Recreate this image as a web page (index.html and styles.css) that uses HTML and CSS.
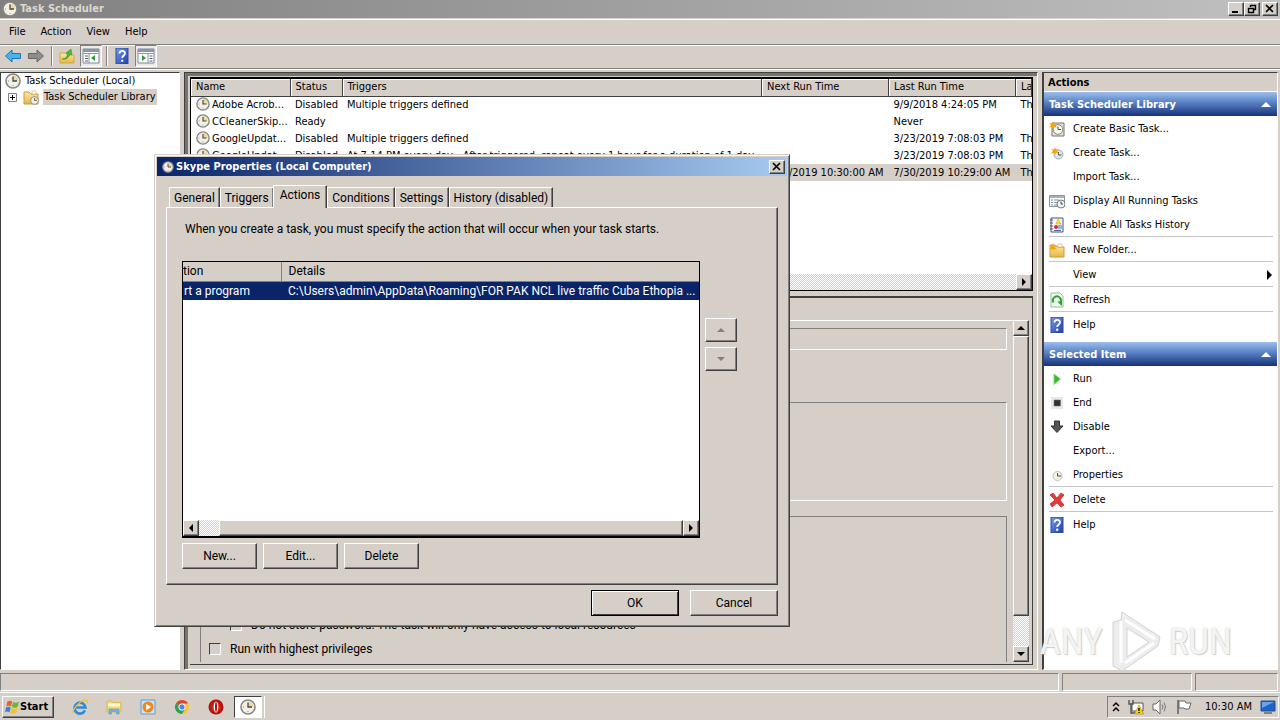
FILE: index.html
```html
<!DOCTYPE html>
<html lang="en">
<head>
<meta charset="utf-8">
<title>Task Scheduler</title>
<link rel="stylesheet" href="styles.css">
</head>
<body>
<svg class="defs" aria-hidden="true">
  <defs>
    <linearGradient id="blue" x1="0" y1="0" x2="1" y2="1"><stop offset="0" stop-color="#7a9bea"/><stop offset="1" stop-color="#1b3fa8"/></linearGradient>
    <linearGradient id="fold" x1="0" y1="0" x2="0" y2="1"><stop offset="0" stop-color="#ffeaa0"/><stop offset="1" stop-color="#e8b548"/></linearGradient>
    <radialGradient id="red"><stop offset="0" stop-color="#f04030"/><stop offset="1" stop-color="#a80808"/></radialGradient>
  </defs>
  <symbol id="clock" viewBox="0 0 16 16"><circle cx="8" cy="8" r="7" fill="#f3f0e2" stroke="#85878c" stroke-width="1.6"/><path d="M8 8V2.500A5.500 5.500 0 0 1 13.500 8z" fill="#f0d990"/><path d="M8 3.500V8h4" fill="none" stroke="#3a4764" stroke-width="1.300"/><path d="M3 8h1M8 12v1" stroke="#888"/></symbol>
  <symbol id="folder" viewBox="0 0 16 16"><path d="M1 3h5l2 2h7v10H1z" fill="url(#fold)" stroke="#c99b3c"/><path d="M9 2h4v3H9z" fill="#fff" stroke="#d0b060" stroke-width=".6"/></symbol>
  <symbol id="spark" viewBox="0 0 8 8"><path d="M4 0l1 2.500 3-.5-2 2 2 2.500-3-.5-1 2-1-2-3 .5 2-2.500-2-2 3 .5z" fill="#f2a516"/></symbol>
  <symbol id="help" viewBox="0 0 16 16"><path d="M2 0h12v16H2z" fill="url(#blue)" stroke="#2c4a9a"/><path d="M5.500 5.500c0-3.500 5.500-3.500 5.500 0 0 2-2.800 2-2.800 4.500" fill="none" stroke="#fff" stroke-width="1.800"/><circle cx="8.200" cy="12.800" r="1.200" fill="#fff"/></symbol>
  <symbol id="panel" viewBox="0 0 18 16"><path d="M1 1h16v14H1z" fill="#fff" stroke="#7c8796"/><path d="M1 1h16v3H1z" fill="#8797ab"/><path d="M1.500 5.500h15M7 6v9" stroke="#8a94a3"/><path d="M3 8h3M3 10.500h3M3 13h3" stroke="#56606e"/><path d="M13 7v6l-4-3z" fill="#2d9a35"/></symbol>
  <symbol id="close" viewBox="0 0 10 10"><path d="M1 1l7 7M8 1L1 8" stroke="#000" stroke-width="1.700"/></symbol>
  <symbol id="newtask" viewBox="0 0 16 16"><path d="M3 2h12v13H3z" fill="#e2e0de" stroke="#74777c"/><circle cx="9" cy="8.500" r="4.800" fill="#fffdf0" stroke="#82858a"/><path d="M9 5.500v3h3" fill="none" stroke="#444"/><use href="#spark" width="8" height="8"/></symbol>
  <symbol id="newclock" viewBox="0 0 16 16"><circle cx="9.500" cy="9.500" r="4.500" fill="#dbe6ee" stroke="#a5a9b0"/><path d="M9.500 7v3h3" fill="none" stroke="#47566b"/><use href="#spark" x="2" y="2" width="8" height="8"/></symbol>
  <symbol id="running" viewBox="0 0 16 16"><path d="M.5 2.500h15v11H.5z" fill="#fafcfc" stroke="#8797a2"/><path d="M1 3h14v2H1z" fill="#a7b4bd"/><path d="M2 7h2M5 7h5M2 9.500h2M5 9.500h4M2 12h2M5 12h4" stroke="#88949b"/><circle cx="12" cy="11" r="4" fill="#f0f3ee" stroke="#737e80"/><path d="M12 8.500V11h2" fill="none" stroke="#3c494c"/></symbol>
  <symbol id="history" viewBox="0 0 16 16"><path d="M2 1h12v14H2z" fill="#f1f4fa" stroke="#46577f"/><path d="M1 3h3M1 6h3M1 9h3M1 12h3" stroke="#555"/><path d="M9 2l3 5H7z" fill="#ffdf1b" stroke="#c9a500" stroke-width=".5"/><circle cx="7" cy="10" r="2" fill="#df2b26"/><path d="M9 9h4M9 11h4M5 13.500h7" stroke="#4967b3"/></symbol>
  <symbol id="newfolder" viewBox="0 0 16 16"><use href="#folder"/><use href="#spark" y="1" width="8" height="8"/></symbol>
  <symbol id="refresh" viewBox="0 0 16 16"><path d="M2 1h9l3 3v11H2z" fill="#f1faf0" stroke="#97bd98"/><path d="M4.500 10.500a4 4 0 1 1 6.500.5" fill="none" stroke="#30a139" stroke-width="2"/><path d="M8 9.500h5V14z" fill="#30a139"/></symbol>
  <symbol id="run" viewBox="0 0 16 16"><path d="M5 3l6.500 5L5 13.500z" fill="#38b82b" stroke="#85d97a"/></symbol>
  <symbol id="end" viewBox="0 0 16 16"><path d="M2 2h12v12H2z" fill="#e8e8e8"/><path d="M5 5h6.500v6H5z" fill="#303030" stroke="#777" stroke-width=".6"/></symbol>
  <symbol id="disable" viewBox="0 0 16 16"><path d="M5.500 2h5v5H14L8 13.500 2 7h3.500z" fill="#555" stroke="#333"/></symbol>
  <symbol id="props" viewBox="0 0 16 16"><circle cx="8.500" cy="9" r="4.500" fill="#f6f1e1" stroke="#b9bcc0"/><path d="M8.500 6v3H12" fill="none" stroke="#424b58"/></symbol>
  <symbol id="delete" viewBox="0 0 16 16"><path d="M1 3l3-2 4 5 4-5 3 2-4 5 4 5-3 2-4-4-5 4-2-3 5-4z" fill="#e53b38" stroke="#bd2727" stroke-width=".7"/></symbol>
</svg>

<header class="titlebar">
  <svg class="i16"><use href="#clock"/></svg><h1>Task Scheduler</h1>
  <button class="cap" aria-label="Minimize"><svg viewBox="0 0 10 10"><path d="M1 8h6" stroke="#000" stroke-width="2"/></svg></button>
  <button class="cap" aria-label="Restore"><svg viewBox="0 0 10 10"><path d="M3.500 3V1.500h5v4H7M3 1.500h6M1.500 4.500h5v4h-5zM1 4.500h6" fill="none" stroke="#000" stroke-width="1.400"/></svg></button>
  <button class="cap last" aria-label="Close"><svg><use href="#close"/></svg></button>
</header>
<nav class="menubar"><button>File</button><button>Action</button><button>View</button><button>Help</button></nav>
<div class="toolbar">
  <button aria-label="Back"><svg class="i16" viewBox="0 0 16 16"><path d="M.5 8L7 2v3.500h8.500v5H7V14z" fill="#47b5ec" stroke="#1876b4"/></svg></button>
  <button aria-label="Forward"><svg class="i16" viewBox="0 0 16 16"><path d="M15.500 8L9 2v3.500H.5v5H9V14z" fill="#8e8e8e" stroke="#666"/></svg></button>
  <i></i>
  <button aria-label="Up"><svg class="i16" viewBox="0 0 16 16"><path d="M1 5h6l1 2h7v8H1z" fill="url(#fold)" stroke="#d2a545"/><path d="M3 11c4 0 5-3 6-5L7 5l5-4 1 6-2-1c-1 4-4 6-8 5z" fill="#47b934" stroke="#2c8c20" stroke-width=".5"/></svg></button>
  <button class="on" aria-label="Show console tree"><svg class="wide"><use href="#panel"/></svg></button>
  <i></i>
  <button aria-label="Help"><svg class="i16"><use href="#help"/></svg></button>
  <button class="on" aria-label="Show action pane"><svg class="wide" viewBox="0 0 18 16"><path d="M1 1h16v14H1z" fill="#fff" stroke="#7c8796"/><path d="M1 1h16v3H1z" fill="#8797ab"/><path d="M1.500 5.500h15M11 6v9" stroke="#8a94a3"/><path d="M12.500 8h3M12.500 10.500h3M12.500 13h3" stroke="#56606e"/><path d="M5 7v6l4-3z" fill="#2d9a35"/></svg></button>
</div>

<main class="main">
  <aside class="tree">
    <div class="node"><svg class="i16"><use href="#clock"/></svg><span>Task Scheduler (Local)</span></div>
    <div class="node child"><button class="plus" aria-label="Expand"><svg viewBox="0 0 9 9"><path d="M.5.5h8v8h-8z" fill="#fff" stroke="#808080"/><path d="M2 4.500h5M4.500 2v5" stroke="#000"/></svg></button><svg class="i16" viewBox="0 0 16 16"><use href="#folder"/><use href="#clock" x="7" y="7" width="9" height="9"/></svg><span class="sel">Task Scheduler Library</span></div>
  </aside>

  <section class="center">
    <div class="tasks">
      <table>
        <colgroup><col class="c1"><col class="c2"><col><col class="c4"><col class="c5"><col class="c6"></colgroup>
        <thead><tr><th>Name</th><th>Status</th><th>Triggers</th><th>Next Run Time</th><th>Last Run Time</th><th>La</th></tr></thead>
        <tbody>
          <tr><td><svg><use href="#clock"/></svg>Adobe Acrob...</td><td>Disabled</td><td>Multiple triggers defined</td><td></td><td>9/9/2018 4:24:05 PM</td><td>Th</td></tr>
          <tr><td><svg><use href="#clock"/></svg>CCleanerSkip...</td><td>Ready</td><td></td><td></td><td>Never</td><td></td></tr>
          <tr><td><svg><use href="#clock"/></svg>GoogleUpdat...</td><td>Disabled</td><td>Multiple triggers defined</td><td></td><td>3/23/2019 7:08:03 PM</td><td>Th</td></tr>
          <tr><td><svg><use href="#clock"/></svg>GoogleUpdat...</td><td>Disabled</td><td>At 7:14 PM every day - After triggered, repeat every 1 hour for a duration of 1 day.</td><td></td><td>3/23/2019 7:08:03 PM</td><td>Th</td></tr>
          <tr class="picked"><td></td><td></td><td></td><td class="r">7/30/2019 10:30:00 AM</td><td>7/30/2019 10:29:00 AM</td><td>Th</td></tr>
        </tbody>
      </table>
      <div class="hscroll"><button class="sb" aria-label="Scroll right"><svg viewBox="0 0 8 8"><path d="M2 0l4 4-4 4z"/></svg></button></div>
    </div>
    <div class="detail">
      <div class="page">
        <div class="field"></div>
        <div class="group"></div>
        <div class="group tall">
          <label class="opt sub"><input type="checkbox">Do not store password. The task will only have access to local resources</label>
          <label class="opt"><input type="checkbox">Run with highest privileges</label>
        </div>
      </div>
      <div class="vscroll"><button class="sb" aria-label="Scroll up"><svg viewBox="0 0 8 8"><path d="M0 6l4-4 4 4z"/></svg></button><div class="thumb"></div><button class="sb" aria-label="Scroll down"><svg viewBox="0 0 8 8"><path d="M0 2l4 4 4-4z"/></svg></button></div>
    </div>
  </section>

  <aside class="actions">
    <h2>Actions</h2>
    <h3>Task Scheduler Library<svg viewBox="0 0 10 6"><path d="M0 5l5-5 5 5z" fill="#fff"/></svg></h3>
    <ul>
      <li><button><svg><use href="#newtask"/></svg>Create Basic Task...</button></li>
      <li><button><svg><use href="#newclock"/></svg>Create Task...</button></li>
      <li><button><svg></svg>Import Task...</button></li>
      <li><button><svg><use href="#running"/></svg>Display All Running Tasks</button></li>
      <li><button><svg><use href="#history"/></svg>Enable All Tasks History</button></li>
      <li class="sep"><button><svg><use href="#newfolder"/></svg>New Folder...</button></li>
      <li class="sep"><button><svg></svg>View<svg class="more" viewBox="0 0 6 10"><path d="M0 0l5 5-5 5z"/></svg></button></li>
      <li class="sep"><button><svg><use href="#refresh"/></svg>Refresh</button></li>
      <li class="sep"><button><svg><use href="#help"/></svg>Help</button></li>
    </ul>
    <h3 class="second">Selected Item<svg viewBox="0 0 10 6"><path d="M0 5l5-5 5 5z" fill="#fff"/></svg></h3>
    <ul>
      <li><button><svg><use href="#run"/></svg>Run</button></li>
      <li><button><svg><use href="#end"/></svg>End</button></li>
      <li><button><svg><use href="#disable"/></svg>Disable</button></li>
      <li><button><svg></svg>Export...</button></li>
      <li><button><svg><use href="#props"/></svg>Properties</button></li>
      <li class="sep"><button><svg><use href="#delete"/></svg>Delete</button></li>
      <li class="sep"><button><svg><use href="#help"/></svg>Help</button></li>
    </ul>
  </aside>
</main>

<div class="status"><span></span><span></span><span></span></div>

<footer class="taskbar">
  <button class="start"><svg viewBox="0 0 16 16"><path d="M3.500 2.500c2-1.200 3.500-1 4.700 0l-1.200 5c-1.500-1-3-1-4.700 0z" fill="#ee6427"/><path d="M9 3c2 1.200 4 1 6-.5l-1.200 5c-2 1.500-4 1.500-6 .5z" fill="#6bb53c"/><path d="M2 8.500c1.700-1.200 3.200-1 4.700 0l-1.200 5c-1.500-1.200-3-1.200-4.700 0z" fill="#3b83d6"/><path d="M7.500 9c2 1.200 4 1 6-.5l-1.200 5c-2 1.500-4 1.500-6 .5z" fill="#f6c324"/></svg>Start</button>
  <div class="launch">
    <button aria-label="Internet Explorer"><svg viewBox="0 0 16 16"><path d="M13 11.500A5.500 5.500 0 1 1 13.500 8.500H4" fill="none" stroke="#2c8ad8" stroke-width="2.600"/><path d="M1.500 14C-.5 11 10-1 14.500 1.500c1 .6.800 2 .3 3" fill="none" stroke="#ecc03a" stroke-width="1.300"/></svg></button>
    <button aria-label="Explorer"><svg viewBox="0 0 16 16"><path d="M1 2h5l1 1.500h8V13H1z" fill="#f2d878" stroke="#dcb951"/><path d="M2 4.500h12v3H2z" fill="#fff6cf"/><path d="M3 15v-5h10v5h-2.500v-2.500h-5V15z" fill="#71b4df" stroke="#5798c8" stroke-width=".6"/></svg></button>
    <button aria-label="Media Player"><svg viewBox="0 0 16 16"><path d="M1 1h14v14H1z" fill="#c9e3f8" stroke="#5a9cd6"/><circle cx="8" cy="8" r="5.500" fill="#ef8617"/><path d="M6.200 4.800l5 3.200-5 3.200z" fill="#fff"/></svg></button>
    <button aria-label="Chrome"><svg viewBox="0 0 16 16"><circle cx="8" cy="8" r="7" fill="#fbc52d"/><path d="M8 8L1.900 4.500A7 7 0 0 1 14.100 4.500H8z" fill="#dd4437"/><path d="M8 8L1.900 4.500A7 7 0 0 0 8 15l3-5z" fill="#2fa155"/><circle cx="8" cy="8" r="3.200" fill="#4a84ee" stroke="#fff"/></svg></button>
    <button aria-label="Opera"><svg viewBox="0 0 16 16"><circle cx="8" cy="8" r="7.500" fill="url(#red)"/><ellipse cx="8" cy="8" rx="2.300" ry="5.500" fill="#fff"/><ellipse cx="8" cy="8" rx="1" ry="5" fill="#b31010"/></svg></button>
  </div>
  <button class="app" aria-label="Task Scheduler"><svg class="i16"><use href="#clock"/></svg></button>
  <div class="tray">
    <svg class="chev" viewBox="0 0 8 12"><path d="M1 5l3-3 3 3M1 10l3-3 3 3" fill="none" stroke="#000" stroke-width="1.500"/></svg>
    <svg viewBox="0 0 16 16"><path d="M4 4h11v8H4z" fill="#fff" stroke="#555"/><path d="M1 1v4h4V1M3 5v9h5" fill="none" stroke="#555" stroke-width="1.400"/><path d="M11 6l4.500 9h-9z" fill="#f7d611" stroke="#a88c00" stroke-width=".6"/><path d="M11 9v3M11 13v1" stroke="#000" stroke-width="1.300"/></svg>
    <svg viewBox="0 0 16 16"><path d="M1 5h3l4-4v14l-4-4H1z" fill="#fff" stroke="#666"/><path d="M10 5.500q2 2.500 0 5M12 3.500q3 4.500 0 9" fill="none" stroke="#777"/></svg>
    <svg viewBox="0 0 16 16"><path d="M2 1v14" stroke="#666" stroke-width="1.600"/><path d="M3 2h6l1 2h5l-2 6H9L8 9H3z" fill="#fff" stroke="#666"/></svg>
    <time>10:30 AM</time>
    <svg viewBox="0 0 16 16"><path d="M1 2h14v10H1z" fill="#1c63cc" stroke="#275088"/><path d="M2 3h12L2 9z" fill="#69a5ed"/><path d="M4 14h8" stroke="#666" stroke-width="1.500"/></svg>
  </div>
</footer>

<div class="watermark" aria-hidden="true"><span>ANY</span><svg viewBox="0 0 56 64"><path fill-rule="evenodd" d="M14 2l38 25-2 9-36 25-9-5V12l8-2zM19 18v29l22-15z" fill="#ededed" stroke="#d2d2d2"/><path d="M13 11v42M17 10l30 19M17 53l29-20" fill="none" stroke="#fff" stroke-width="3"/></svg><span>RUN</span></div>

<div class="dialog" role="dialog" aria-label="Skype Properties">
  <div class="dtitle"><svg><use href="#clock"/></svg><h2>Skype Properties (Local Computer)</h2><button class="cap" aria-label="Close"><svg><use href="#close"/></svg></button></div>
  <div class="dbody">
    <div class="tabs" role="tablist"><button role="tab">General</button><button role="tab">Triggers</button><button role="tab" class="active" aria-selected="true">Actions</button><button role="tab">Conditions</button><button role="tab">Settings</button><button role="tab">History (disabled)</button></div>
    <div class="sheet">
      <p>When you create a task, you must specify the action that will occur when your task starts.</p>
      <div class="row">
        <div class="list">
          <table>
            <colgroup><col class="a1"><col></colgroup>
            <thead><tr><th>tion</th><th>Details</th></tr></thead>
            <tbody><tr><td>rt a program</td><td>C:\Users\admin\AppData\Roaming\FOR PAK NCL live traffic Cuba Ethopia ...</td></tr></tbody>
          </table>
          <div class="hscroll"><button class="sb" aria-label="Scroll left"><svg viewBox="0 0 8 8"><path d="M6 0L2 4l4 4z"/></svg></button><div class="thumb"></div><button class="sb" aria-label="Scroll right"><svg viewBox="0 0 8 8"><path d="M2 0l4 4-4 4z"/></svg></button></div>
        </div>
        <div class="order"><button class="btn" aria-label="Move up" disabled><svg viewBox="0 0 8 8"><path d="M0 6l4-4 4 4z"/></svg></button><button class="btn" aria-label="Move down" disabled><svg viewBox="0 0 8 8"><path d="M0 2l4 4 4-4z"/></svg></button></div>
      </div>
      <div class="edit"><button class="btn">New...</button><button class="btn">Edit...</button><button class="btn">Delete</button></div>
    </div>
    <div class="confirm"><button class="btn ok">OK</button><button class="btn">Cancel</button></div>
  </div>
</div>
</body>
</html>
```
FILE: styles.css
```css
* { box-sizing: border-box; }
:root { --face: #d5cfc8; --dark: #808080; --ink: #404040; }
body { margin: 0; height: 100vh; overflow: hidden; display: flex; flex-direction: column; position: relative; background: var(--face); color: #000; font: 11px/16px "DejaVu Sans Condensed", "DejaVu Sans", sans-serif; }
button { font: inherit; color: inherit; background: none; border: 0; padding: 0; margin: 0; white-space: nowrap; }
h1, h2, h3, p, ul { margin: 0; padding: 0; font-size: inherit; }
ul { list-style: none; }
svg { display: block; flex: none; }
table { border-collapse: collapse; table-layout: fixed; width: 100%; }
.defs { position: absolute; width: 0; height: 0; }
.i16 { width: 16px; height: 16px; }

.titlebar { display: flex; align-items: center; height: 18px; padding: 0 2px; background: linear-gradient(90deg, #808080, #c0c0c0); color: #dcd8d0; }
.titlebar h1 { flex: 1; margin-left: 2px; }
.cap { width: 16px; height: 14px; display: grid; place-items: center; background: var(--face); border: 1px solid; border-color: #fff var(--ink) var(--ink) #fff; box-shadow: inset -1px -1px var(--dark); }
.cap svg { width: 10px; height: 10px; }
.cap.last { margin-left: 2px; }

.menubar { height: 26px; display: flex; align-items: center; gap: 15px; padding: 0 9px; border-top: 1px solid #fff; border-bottom: 1px solid var(--dark); margin-top: 1px; }
.toolbar { height: 24px; display: flex; align-items: center; gap: 7px; padding: 0 5px 2px; border-top: 1px solid #fff; border-bottom: 1px solid var(--dark); }
.toolbar i { width: 1px; height: 20px; background: var(--dark); box-shadow: 1px 0 #fff; }
.toolbar .on { padding: 2px 1px; margin: 0 -3px 0 -2px; background: #eeebe7; border: 1px solid; border-color: var(--dark) #fff #fff var(--dark); }
.wide { width: 18px; height: 16px; }

.main { flex: 1; min-height: 0; display: flex; gap: 4px; padding: 2px 2px 3px 0; border-top: 1px solid #fff; }
.tree { width: 180px; background: #fff; border: 1px solid; border-color: var(--ink) #fff #fff var(--ink); padding: 0 4px; }
.node { display: flex; align-items: center; height: 16px; gap: 4px; }
.node.child { padding-left: 3px; }
.node.child .i16 { margin-left: 2px; }
.plus svg { width: 9px; height: 9px; }
.sel { background: var(--face); padding: 0 1px; }

.center { flex: 1; min-width: 0; display: flex; flex-direction: column; border: 1px solid; border-color: var(--ink) #fff #fff var(--ink); box-shadow: inset 3px 3px #77746f; padding: 4px 4px 4px 5px; }
.tasks { height: 214px; display: flex; flex-direction: column; justify-content: space-between; background: #fff; border: 1px solid #000; border-width: 2px 1px 1px 1px; overflow: hidden; flex: none; }
.tasks td, .tasks th { height: 17px; padding: 0 0 0 5px; text-align: left; font-weight: 400; white-space: nowrap; overflow: hidden; line-height: 16px; }
.tasks th { background: var(--face); border-right: 1px solid var(--ink); border-bottom: 1px solid var(--ink); box-shadow: inset 1px 1px #fff; }
.tasks td svg { float: left; width: 14px; height: 14px; margin: 0 2px 0 0; }
.tasks td.r { text-align: right; padding-right: 5px; }
.picked { background: var(--face); }
.c1 { width: 99px; } .c2 { width: 52px; } .c4 { width: 127px; } .c5 { width: 127px; } .c6 { width: 16px; }
.hscroll, .vscroll { display: flex; justify-content: flex-end; background: repeating-conic-gradient(#fff 0 25%, #d5cfc8 0 50%) 0 0 / 2px 2px; flex: none; }
.hscroll { height: 16px; }
.sb { width: 16px; height: 16px; flex: none; display: grid; place-items: center; }
.sb svg { width: 8px; height: 8px; }
.sb, .thumb { background: var(--face); border: 1px solid; border-color: #fff var(--ink) var(--ink) #fff; box-shadow: inset -1px -1px var(--dark); }
.thumb { flex: 1; }

.detail { flex: 1; min-height: 0; display: flex; margin-top: 5px; padding: 22px 3px 2px 10px; border-top: 2px solid var(--ink); border-bottom: 1px solid var(--ink); border-right: 1px solid var(--ink); font: 12px/16px Roboto, sans-serif; }
.page { flex: 1; display: flex; flex-direction: column; border-top: 1px solid #fff; padding: 7px 6px 0 0; min-height: 0; }
.field { height: 22px; flex: none; border: 1px solid #fff; border-top-color: var(--dark); }
.group { height: 99px; flex: none; margin-top: 52px; border: 1px solid #fff; border-top-color: var(--dark); }
.group.tall { flex: 1; height: auto; min-height: 0; margin-top: 15px; border-color: var(--dark); border-bottom: 0; display: flex; flex-direction: column; justify-content: flex-end; gap: 8px; padding: 0 8px 5px; }
.opt { display: flex; align-items: center; gap: 9px; }
.opt.sub { padding-left: 21px; }
.opt input { appearance: none; width: 12px; height: 12px; margin: 0; border: 1px solid; border-color: var(--ink) #fff #fff var(--ink); }
.vscroll { width: 16px; flex-direction: column; justify-content: flex-start; }
.vscroll .thumb { flex: none; height: 82%; }
.vscroll .sb:last-child { margin-top: auto; }

.actions { width: 236px; background: #fff; border: 1px solid; border-color: var(--ink) #fff #fff var(--ink); border-left-width: 2px; }
.actions h2 { height: 19px; padding: 2px 4px 0; line-height: 16px; background: var(--face); border-bottom: 1px solid #fff; }
.actions h3 { height: 24px; display: flex; align-items: center; justify-content: space-between; padding: 1px 6px 0 5px; color: #fff; background: linear-gradient(#9dbdec, #5e87c8 40%, #17327c); }
.actions h3 svg { width: 10px; height: 6px; }
.actions .second { margin-top: 6px; }
.actions li { height: 24px; margin: 0 4px 0 5px; }
.actions .sep { height: 25px; border-top: 1px solid #c5c5c5; }
.actions button { width: 100%; height: 24px; display: flex; align-items: center; gap: 8px; padding-top: 1px; text-align: left; }
.actions button svg { width: 16px; height: 16px; }
.actions button .more { width: 6px; height: 10px; margin-left: auto; }

.status { height: 18px; display: flex; gap: 3px; padding-right: 2px; }
.status span { border: 1px solid; border-color: var(--dark) #fff #fff var(--dark); width: 130px; }
.status span:first-child { flex: 1; }
.status span:last-child { width: 83px; }

.taskbar { height: 28px; display: flex; align-items: center; border-top: 1px solid #fff; padding: 0 1px 0 2px; margin-top: 1px; }
.start, .btn { background: var(--face); border: 1px solid; border-color: #fff var(--ink) var(--ink) #fff; box-shadow: inset -1px -1px var(--dark); }
.start { width: 52px; height: 22px; display: flex; align-items: center; font-weight: 700; padding: 0 1px; }
.start svg, .launch svg { width: 16px; height: 16px; }
.launch { display: flex; gap: 18px; padding: 0 10px 0 18px; }
.app { width: 28px; height: 22px; display: grid; place-items: center; background: #fff; border: 1px solid; border-color: var(--ink) #fff #fff var(--ink); box-shadow: 2px 0 var(--face), 3px 0 #fff; }
.tray { margin-left: auto; height: 22px; display: flex; align-items: center; gap: 8px; padding: 0 2px 0 4px; border: 1px solid; border-color: var(--dark) #fff #fff var(--dark); }
.tray svg { width: 16px; height: 16px; }
.tray .chev { width: 8px; height: 12px; }
.tray time { padding: 0 0 0 5px; }

.watermark { position: absolute; right: 48px; bottom: 46px; display: flex; align-items: center; gap: 5px; color: #f4f4f4; text-shadow: 0 0 2px #aaaaaa90, 1px 1px 1px #aaaaaa80; font: 37px/64px "Liberation Sans Narrow", "Roboto Condensed", "Liberation Sans", sans-serif; pointer-events: none; }
.watermark svg { width: 56px; height: 64px; }

.dialog { position: absolute; left: 154px; top: 154px; width: 636px; background: var(--face); border: 1px solid; border-color: var(--face) var(--ink) var(--ink) var(--face); box-shadow: inset 1px 1px #fff, inset -1px -1px var(--dark); padding: 2px; font: 12px/16px Roboto, sans-serif; }
.dtitle { height: 19px; display: flex; align-items: center; padding: 0 2px 0 5px; color: #fff; background: linear-gradient(90deg, #0a246a, #a6caf0); font: 700 11px/16px "DejaVu Sans Condensed", "DejaVu Sans", sans-serif; }
.dtitle > svg { width: 12px; height: 12px; }
.dtitle h2 { flex: 1; margin-left: 2px; }
.dbody { padding: 9px 9px 8px; }
.tabs { display: flex; align-items: flex-end; height: 22px; padding-left: 3px; }
.tabs button { height: 20px; padding: 0 4px; border: 1px solid; border-color: #fff var(--ink) transparent #fff; border-bottom: 0; box-shadow: inset -1px 0 var(--dark); }
.tabs .active { height: 23px; padding: 0 6px 4px; margin: 0 0 -1px -1px; background: var(--face); position: relative; }
.sheet { border: 1px solid; border-color: #fff var(--ink) var(--ink) #fff; box-shadow: inset -1px -1px var(--dark); padding: 13px 15px 15px; }
.sheet p { padding-left: 3px; }
.row { display: flex; gap: 5px; margin-top: 24px; }
.list { width: 518px; height: 277px; background: #fff; border: 1px solid #000; border-bottom-width: 2px; display: flex; flex-direction: column; justify-content: space-between; }
.list th, .list td { text-align: left; font-weight: 400; white-space: nowrap; padding: 0 0 0 7px; height: 19px; }
.list th { background: var(--face); border-right: 1px solid var(--dark); border-bottom: 1px solid var(--dark); }
.list th:last-child { border-right: 0; }
.list td { background: #0a246a; color: #fff; }
.list th:first-child { padding: 0; }
.list td:first-child { padding: 0 0 0 1px; }
.a1 { width: 98px; }
.list .hscroll { justify-content: flex-start; }
.list .thumb { margin-left: 20px; }
.order { display: flex; flex-direction: column; gap: 5px; padding-top: 57px; }
.order .btn { width: 32px; height: 24px; display: grid; place-items: center; }
.order svg { width: 8px; height: 8px; fill: #808080; }
.edit { display: flex; gap: 6px; margin-top: 5px; }
.edit .btn { width: 75px; height: 26px; }
.confirm { display: flex; justify-content: flex-end; gap: 11px; margin-top: 5px; }
.confirm .btn { width: 88px; height: 26px; }
.confirm .ok { outline: 1px solid #000; outline-offset: -1px; border-color: #000; box-shadow: inset 1px 1px #fff, inset -1px -1px var(--ink); }
```
